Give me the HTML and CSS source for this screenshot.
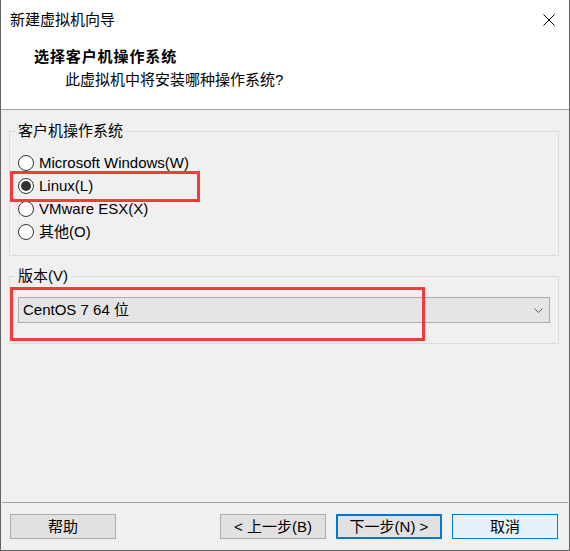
FILE: index.html
```html
<!DOCTYPE html>
<html lang="zh-CN">
<head>
<meta charset="utf-8">
<title>新建虚拟机向导</title>
<link rel="stylesheet" href="styles.css">
</head>
<body>
<div class="window">
  <div class="titlebar">
    <span class="title">新建虚拟机向导</span>
    <svg class="close" width="12" height="12" viewBox="0 0 12 12"><path d="M0.5 0.5 L11.5 11.5 M11.5 0.5 L0.5 11.5" stroke="#000" stroke-width="1" fill="none"/></svg>
  </div>
  <div class="header">
    <h1 class="heading">选择客户机操作系统</h1>
    <p class="subtitle">此虚拟机中将安装哪种操作系统?</p>
  </div>
  <div class="content">
    <fieldset class="group group-os">
      <legend class="legend">客户机操作系统</legend>
      <div class="radio"><span class="dot"></span><span>Microsoft Windows(W)</span></div>
      <div class="radio checked"><span class="dot"></span><span>Linux(L)</span></div>
      <div class="radio"><span class="dot"></span><span>VMware ESX(X)</span></div>
      <div class="radio"><span class="dot"></span><span>其他(O)</span></div>
    </fieldset>
    <fieldset class="group group-ver">
      <legend class="legend">版本(V)</legend>
      <div class="combo">
        <span>CentOS 7 64 位</span>
        <svg class="chev" width="9" height="5" viewBox="0 0 9 5"><path d="M0.5 0.5 L4.5 4.5 L8.5 0.5" stroke="#606060" stroke-width="1" fill="none"/></svg>
      </div>
    </fieldset>
  </div>
  <div class="footer">
    <div class="btn help">帮助</div>
    <div class="btn">&lt; 上一步(B)</div>
    <div class="btn primary">下一步(N) &gt;</div>
    <div class="btn hover">取消</div>
  </div>
  <div class="mark mark-linux"></div>
  <div class="mark mark-version"></div>
</div>
</body>
</html>
```
FILE: styles.css
```css
* { box-sizing: border-box; }
body {
  margin: 0;
  font-family: "Liberation Sans", "Noto Sans CJK SC", sans-serif;
  font-size: 15px;
  color: #000;
}
.window {
  position: relative;
  width: 570px;
  height: 551px;
  display: flex;
  flex-direction: column;
  background: #f0f0f0;
  border: 1px solid #646464;
  border-top: 0;
}
.titlebar {
  height: 40px;
  flex: none;
  background: #fff;
  display: flex;
  align-items: center;
  justify-content: space-between;
  padding: 0 14px 0 9px;
}
.title { line-height: 20px; }
.close { display: block; }
.header {
  flex: none;
  background: #fff;
  padding: 7px 0 19px;
  border-bottom: 1px solid #a0a0a0;
}
.heading {
  margin: 0 0 3px 33px;
  font-size: 15px;
  font-weight: bold;
  line-height: 20px;
  letter-spacing: 0.9px;
}
.subtitle {
  margin: 0 0 0 64px;
  line-height: 20px;
}
.content {
  flex: 1;
  padding: 11px 10px 0 8px;
}
.group {
  margin: 0;
  min-width: 0;
  border: 1px solid #dcdcdc;
  padding: 10px 8px 12px 8px;
}
.legend {
  padding: 0 3px;
  margin-left: -3px;
  line-height: 20px;
}
.radio {
  height: 23px;
  display: flex;
  align-items: center;
  gap: 5px;
  line-height: 20px;
}
.dot {
  width: 16px;
  height: 16px;
  border: 1px solid #333;
  border-radius: 50%;
  background: #fff;
  display: flex;
  align-items: center;
  justify-content: center;
  flex: none;
}
.radio.checked .dot::after {
  content: "";
  width: 10px;
  height: 10px;
  border-radius: 50%;
  background: #333;
}
.group-ver {
  margin-top: 10px;
  padding: 11px 8px 20px 8px;
}
.combo {
  height: 26px;
  border: 1px solid #adadad;
  background: #e5e5e5;
  display: flex;
  align-items: center;
  justify-content: space-between;
  padding: 0 6px 0 4px;
  line-height: 20px;
}
.chev { display: block; }
.footer {
  flex: none;
  margin: 0 1px;
  border-top: 1px solid #a0a0a0;
  padding: 11px 10px 11px 8px;
  display: flex;
  gap: 10px;
}
.btn {
  width: 106px;
  height: 25px;
  border: 1px solid #adadad;
  background: #e1e1e1;
  display: flex;
  align-items: center;
  justify-content: center;
  line-height: 20px;
}
.btn.help { margin-right: auto; }
.btn.primary { border: 2px solid #0078d7; }
.btn.hover { border-color: #0078d7; background: #e5f1fb; }
.mark {
  position: absolute;
  border: 3px solid #f23c3c;
}
.mark-linux { left: 9px; top: 171px; width: 190px; height: 31px; }
.mark-version { left: 9px; top: 287px; width: 415px; height: 54px; }
```
